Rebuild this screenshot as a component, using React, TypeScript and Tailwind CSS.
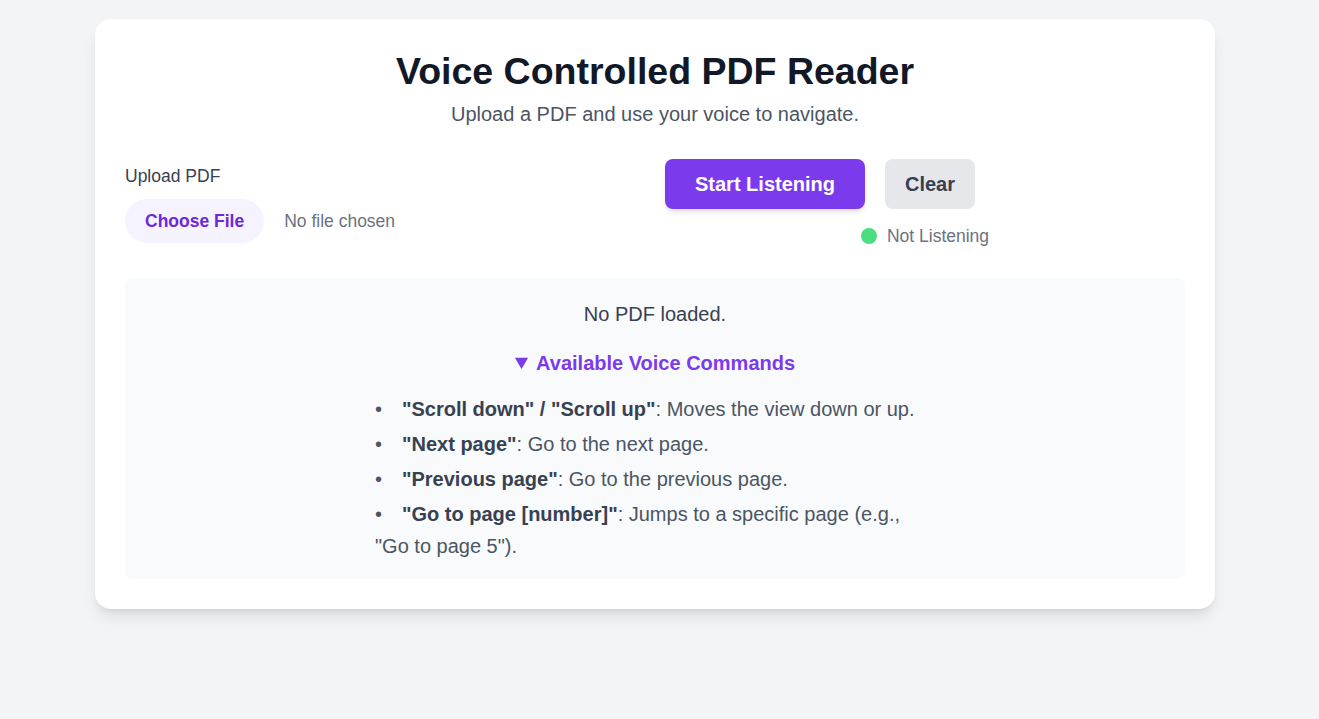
import React from "react";

const commands = [
  { cmd: '"Scroll down" / "Scroll up"', desc: ": Moves the view down or up." },
  { cmd: '"Next page"', desc: ": Go to the next page." },
  { cmd: '"Previous page"', desc: ": Go to the previous page." },
  { cmd: '"Go to page [number]"', desc: ': Jumps to a specific page (e.g., "Go to page 5").' },
];

export default function App() {
  return (
    <div
      className="min-h-screen bg-[#f3f4f6] pt-[19px]"
      style={{ fontFamily: '"Liberation Sans", Arial, sans-serif' }}
    >
      <div className="ml-[95px] w-[1120px] rounded-2xl bg-white p-[30px] shadow-lg">
        <h1 className="mt-[2px] text-center text-[37.5px] leading-[40px] font-bold text-[#111827]">
          Voice Controlled PDF Reader
        </h1>
        <p className="mt-[9px] text-center text-xl leading-7 text-[#4b5563]">
          Upload a PDF and use your voice to navigate.
        </p>

        <div className="mt-[31px] grid grid-cols-2 gap-5">
          <div className="pt-[5px]">
            <label className="block text-[17.5px] leading-6 text-[#374151]">Upload PDF</label>
            <div className="mt-[11px] flex items-center gap-5">
              <button className="h-11 rounded-full bg-[#f5f3ff] px-5 text-[17.5px] font-bold text-[#6d28d9]">
                Choose File
              </button>
              <span className="text-[17.5px] text-[#6b7280]">No file chosen</span>
            </div>
          </div>
          <div>
            <div className="flex gap-5">
              <button className="h-[50px] w-[200px] rounded-lg bg-[#7c3aed] text-xl font-bold text-white shadow-md">
                Start Listening
              </button>
              <button className="h-[50px] w-[90px] rounded-lg bg-[#e5e7eb] text-xl font-bold text-[#374151]">
                Clear
              </button>
            </div>
            <div className="mt-[15px] flex items-center justify-center gap-[10px]">
              <span className="h-4 w-4 rounded-full bg-[#4ade80]" />
              <span className="text-[17.5px] leading-6 text-[#6b7280]">Not Listening</span>
            </div>
          </div>
        </div>

        <div className="mt-[30px] rounded-lg bg-[#f9fafb] px-5 pb-[17px] pt-[22px]">
          <p className="text-center text-xl leading-7 text-[#374151]">No PDF loaded.</p>
          <details open className="mt-[21px]">
            <summary className="cursor-pointer text-center text-xl leading-7 font-bold text-[#7c3aed]">
              Available Voice Commands
            </summary>
            <ul className="mx-auto mt-4 max-w-[560px] space-y-[3px] text-left text-xl leading-8 text-[#4b5563]">
              {commands.map((c) => (
                <li key={c.cmd}>
                  <span className="inline-block w-[27px]">•</span>
                  <strong className="font-bold text-[#374151]">{c.cmd}</strong>
                  {c.desc}
                </li>
              ))}
            </ul>
          </details>
        </div>
      </div>
    </div>
  );
}
